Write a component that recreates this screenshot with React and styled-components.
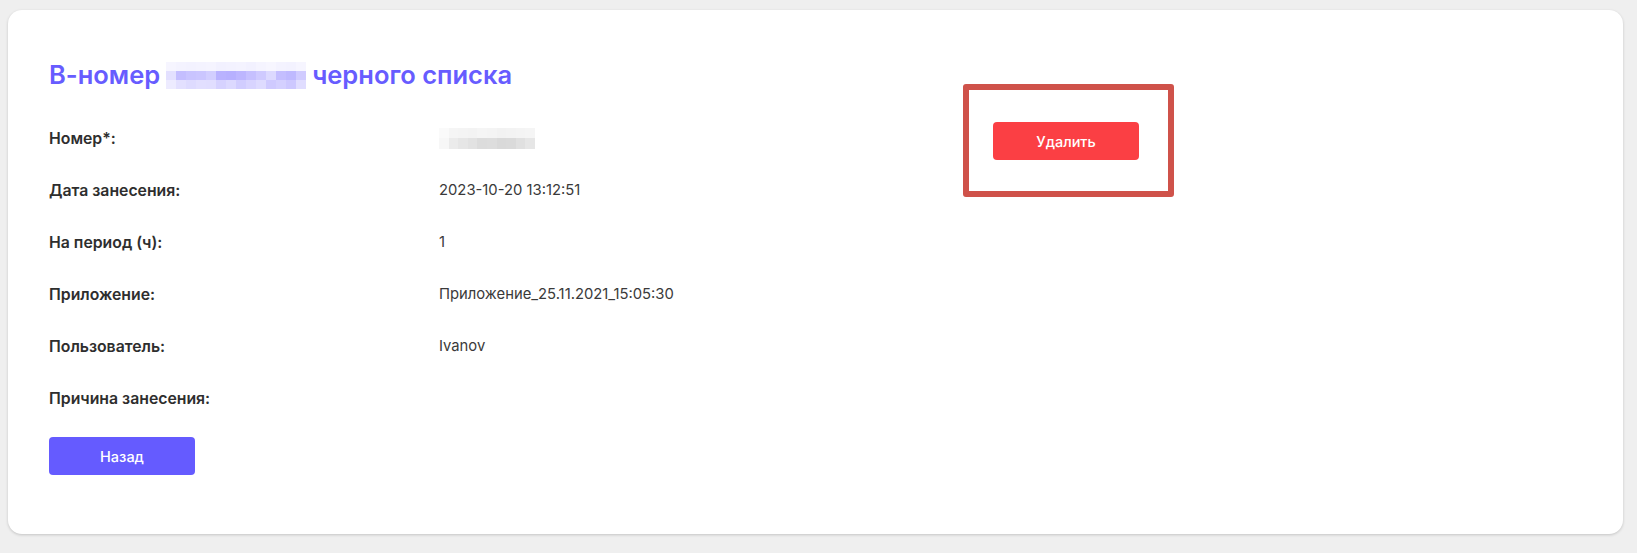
import React from "react";
import styled, { createGlobalStyle } from "styled-components";

const Global = createGlobalStyle`
  html, body { margin: 0; padding: 0; background: #efefef; }
  body { font-family: Inter, "Noto Sans", sans-serif; color: #2b2b2b; }
  * { box-sizing: border-box; }
`;

const Page = styled.div`
  padding: 10px 14px 19px 8px;
`;

const Card = styled.div`
  background: #fff;
  border-radius: 14px;
  box-shadow: 0 1px 3px rgba(0, 0, 0, 0.18);
  padding: 49px 40px 59px 41px;
`;

const Title = styled.h1`
  margin: 0;
  font-size: 25.5px;
  line-height: 32px;
  font-weight: 600;
  color: #675cff;
  display: flex;
  align-items: center;
  gap: 6px;
`;

const Body = styled.div`
  display: flex;
  align-items: flex-start;
  margin-top: 21px;
`;

const Left = styled.div`
  width: 944px;
  display: flex;
  flex-direction: column;
`;

const Row = styled.div`
  display: grid;
  grid-template-columns: 390px 1fr;
  align-items: center;
  height: 52px;
`;

const Label = styled.div`
  font-size: 15.8px;
  font-weight: 600;
  color: #2e2e2e;
`;

const Value = styled.div`
  font-size: 14.8px;
  font-weight: 400;
  color: #3a3a3a;
`;

const Button = styled.button`
  width: 146px;
  height: 38px;
  border: none;
  border-radius: 4px;
  background: ${(p) => p.$bg};
  color: #fff;
  font-family: Inter, "Noto Sans", sans-serif;
  font-size: 14.5px;
  font-weight: 500;
  cursor: pointer;
`;

const BackButton = styled(Button)`
  margin-top: 13px;
`;

const Right = styled.div`
  position: relative;
  padding-top: 10px;
`;

const Highlight = styled.div`
  position: absolute;
  left: -30px;
  top: -28px;
  width: 211px;
  height: 113px;
  border: 6px solid #cf524a;
  border-radius: 3px;
  pointer-events: none;
`;

const Blur = styled.span`
  display: inline-grid;
  grid-template-columns: repeat(${(p) => p.$cols}, ${(p) => p.$cw}px);
  grid-auto-rows: ${(p) => p.$rh}px;
  vertical-align: middle;
`;

const Cell = styled.span`
  display: block;
  background: ${(p) => p.$c};
`;

const titleBlur = [
  ["#f6f5ff","#f4f3ff","#f3f2ff","#f4f3ff","#f5f4ff","#f2f1ff","#f3f2ff","#f4f3ff","#f2f1ff","#f5f4ff","#f7f6ff","#f4f3ff","#f3f2ff","#f6f5ff"],
  ["#e3e0ff","#c4beff","#c9c4ff","#cbc6ff","#d2ceff","#b9b2ff","#b7b0ff","#bdb6ff","#c6c0ff","#cfcaff","#dcd9ff","#c4beff","#bfb9ff","#d0cbff"],
  ["#edebff","#e3e0ff","#dedbff","#e2dfff","#e1deff","#d6d2ff","#dcd9ff","#d1cdff","#d8d4ff","#dedbff","#cfcaff","#d4d0ff","#cdc8ff","#e0ddff"],
];

const numBlur = [
  ["#fafafa","#f5f5f5","#f4f4f4","#f3f3f3","#f5f5f5","#f4f4f4","#f2f2f2","#f3f3f3","#f4f4f4","#f5f5f5"],
  ["#f7f7f7","#ebebeb","#e6e6e6","#e2e2e2","#dcdcdc","#dddddd","#d9d9d9","#dadada","#e0e0e0","#e6e6e6"],
];

const BlurBlock = ({ data, cw, rh }) => (
  <Blur $cols={data[0].length} $cw={cw} $rh={rh}>
    {data.flatMap((r, i) => r.map((c, j) => <Cell key={i + "-" + j} $c={c} />))}
  </Blur>
);

const rows = [
  ["Номер*:", <BlurBlock key="b" data={numBlur} cw={9.6} rh={10.5} />],
  ["Дата занесения:", "2023-10-20 13:12:51"],
  ["На период (ч):", "1"],
  ["Приложение:", "Приложение_25.11.2021_15:05:30"],
  ["Пользователь:", "Ivanov"],
  ["Причина занесения:", ""],
];

export default function App() {
  return (
    <>
      <Global />
      <Page>
        <Card>
          <Title>
            <span>В-номер</span>
            <BlurBlock data={titleBlur} cw={10} rh={9} />
            <span>черного списка</span>
          </Title>
          <Body>
            <Left>
              {rows.map(([l, v]) => (
                <Row key={l}>
                  <Label>{l}</Label>
                  <Value>{v}</Value>
                </Row>
              ))}
              <BackButton $bg="#655bff">Назад</BackButton>
            </Left>
            <Right>
              <Highlight />
              <Button $bg="#fb3f44">Удалить</Button>
            </Right>
          </Body>
        </Card>
      </Page>
    </>
  );
}
